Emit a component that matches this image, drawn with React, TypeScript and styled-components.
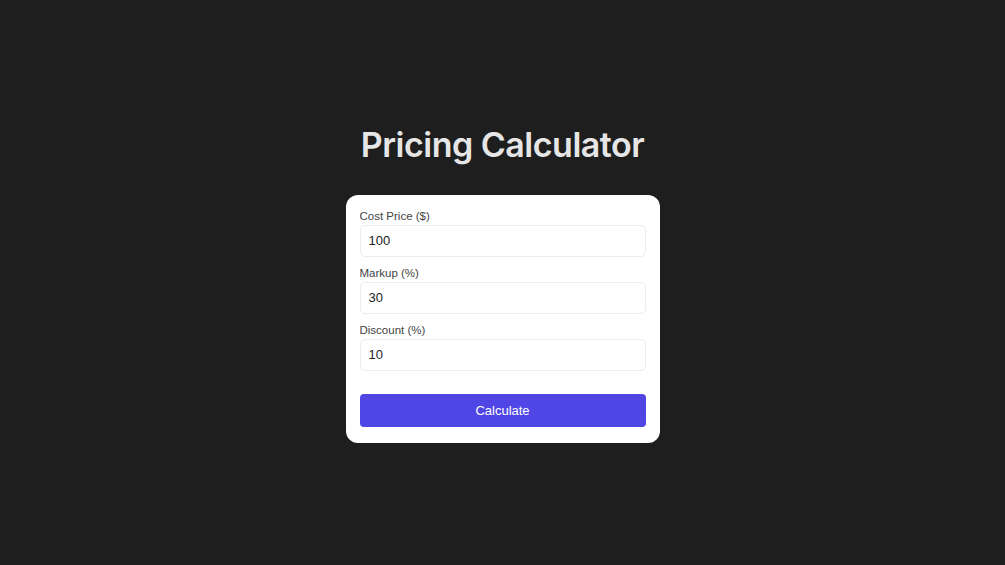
import React from "react";
import styled, { createGlobalStyle } from "styled-components";

const Global = createGlobalStyle`
  html, body { margin: 0; padding: 0; background: #1e1e1e; }
  #root { min-height: 100vh; }
`;

const Page = styled.div`
  min-height: 565px;
  display: flex;
  flex-direction: column;
  align-items: center;
  justify-content: center;
  background: #1e1e1e;
`;

const Title = styled.h1`
  margin: 0 0 28px;
  font-family: Inter, "Noto Sans", sans-serif;
  font-weight: 600;
  font-size: 34px;
  line-height: 44px;
  color: #e6e6e6;
  letter-spacing: -0.5px;
`;

const Card = styled.div`
  width: 314px;
  box-sizing: border-box;
  background: #ffffff;
  border-radius: 12px;
  padding: 15px 14px 16px;
  display: flex;
  flex-direction: column;
`;

const Field = styled.div`
  display: flex;
  flex-direction: column;
  margin-bottom: 10px;
`;

const Label = styled.label`
  font-family: "Liberation Sans", Arial, sans-serif;
  font-size: 11.5px;
  line-height: 12px;
  color: #444;
  margin-bottom: 3px;
`;

const Input = styled.input`
  box-sizing: border-box;
  height: 32px;
  width: 100%;
  border: 1px solid #ececec;
  border-radius: 5px;
  padding: 0 8px;
  font-family: "Liberation Sans", Arial, sans-serif;
  font-size: 13px;
  color: #222;
  background: #fff;
  outline: none;
`;

const Button = styled.button`
  margin-top: 13px;
  height: 33px;
  width: 100%;
  border: none;
  border-radius: 4px;
  background: #4f46e5;
  color: #fff;
  font-family: "Liberation Sans", Arial, sans-serif;
  font-size: 13px;
  cursor: pointer;
`;

const fields = [
  { label: "Cost Price ($)", value: "100" },
  { label: "Markup (%)", value: "30" },
  { label: "Discount (%)", value: "10" },
];

export default function App() {
  return (
    <>
      <Global />
      <Page>
        <Title>Pricing Calculator</Title>
        <Card>
          {fields.map((f) => (
            <Field key={f.label}>
              <Label>{f.label}</Label>
              <Input type="number" defaultValue={f.value} />
            </Field>
          ))}
          <Button>Calculate</Button>
        </Card>
      </Page>
    </>
  );
}
